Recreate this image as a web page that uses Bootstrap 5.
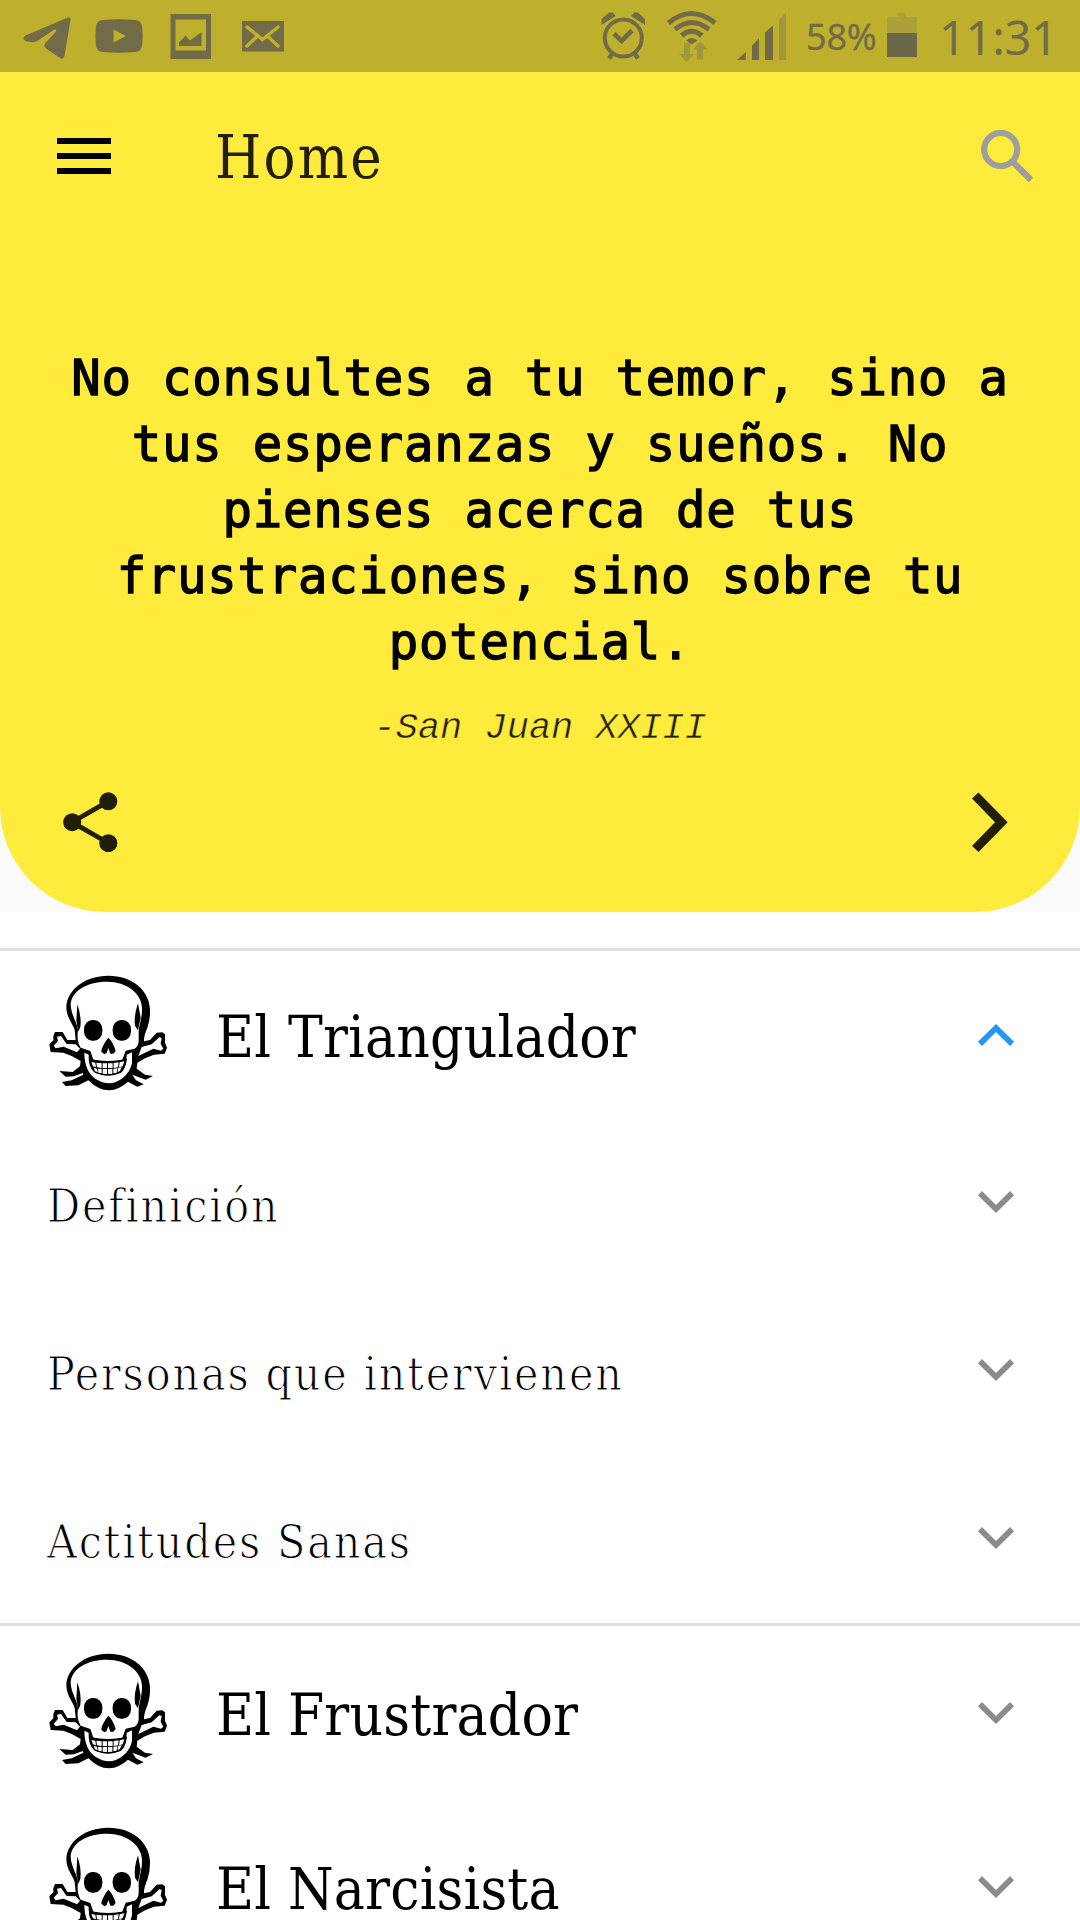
<!DOCTYPE html>
<html lang="es">
<head>
<meta charset="utf-8">
<meta name="viewport" content="width=device-width, initial-scale=1">
<title>Home</title>
<link href="https://cdn.jsdelivr.net/npm/bootstrap@5.3.0/dist/css/bootstrap.min.css" rel="stylesheet">
<style>
  body { width: 1080px; height: 1920px; overflow: hidden; background: #fff; }
  svg { display: block; flex: none; }
  .status-bar { height: 72px; background: #beb02c; color: #716c47; font-family: "Noto Sans", sans-serif; padding-left: 23px; white-space: nowrap; }
  .status-bar svg { fill: currentColor; }
  .pct { font-size: 36px; letter-spacing: -.2px; width: 80px; line-height: 72px; padding-top: 1px; -webkit-text-stroke: .3px currentColor; }
  .clock { font-size: 47px; letter-spacing: -.3px; width: 141px; line-height: 72px; padding-top: 1px; }
  .backdrop { background: #fafafa; }
  .hero { height: 912px; background: #ffeb3b; border-radius: 0 0 105px 105px; overflow: hidden; }
  .app-bar { height: 168px; padding: 0 47px 0 57px; }
  .slab { font-family: "DejaVu Serif Condensed", "DejaVu Serif", serif; font-stretch: condensed; font-size: 58px; line-height: 80px; color: #000; white-space: nowrap; padding-top: 4px; }
  .app-title { margin-left: 104px; color: #211f09; font-size: 59px; letter-spacing: 2.2px; }
  .quote { margin: 106px 0 0; height: 330px; font-family: "DejaVu Sans Mono", monospace; font-size: 49px; line-height: 66px; letter-spacing: .74px; color: #000; -webkit-text-stroke: 1.3px #000; }
  .author { font-family: "Liberation Mono", monospace; font-size: 37px; line-height: 50px; height: 50px; margin-top: 27px; color: #211f09; -webkit-text-stroke: .5px #ffeb3b; }
  .actions { padding: 0 72px 0 63px; margin-top: 39px; }
  .skulls { margin-top: 36px; }
  .group-head { height: 174px; padding: 0 66px 0 49px; }
  .group-head.open { height: 168px; }
  .group-head .slab { margin-left: 49px; letter-spacing: .2px; }
  .skull { margin-bottom: 5px; }
  .rule { height: 3px; background: #dfdfdf; }
  .sub { height: 168px; padding: 0 66px 0 47px; }
  .sub .slab { font-size: 46px; color: #000; letter-spacing: 1.85px; padding-top: 6px; -webkit-text-stroke: 1px #fff; }
  .sub svg { margin-bottom: 2px; }
</style>
</head>
<body>
<svg width="0" height="0" class="position-absolute">
  <defs>
    <symbol id="skull" viewBox="57 42 354 348">
      <path d="M137 237H112L98 213H75L70 225V238L58 250L62 273L100 275L125 285L152 300L150 316L128 333L88 330L107 347L132 346L158 336L160 341L125 358L96 363L107 375L145 373L175 358Q205 388 237 388Q268 386 294 362L322 377L341 370L318 358L307 341L347 356L369 345L345 341L320 323L322 305L345 292L372 281L404 278L411 260L405 245V220L397 214L380 215L360 237L342 241Q341 225 352 200Q361 175 360 145C358 88 307 44 235 44C165 44 111 86 109 138C109 170 130 190 134 207Z"/>
      <path fill="#fff" d="M144 208C144 190 122 160 122 130C124 93 166 62 232 62C290 62 335 98 336 140C337 170 328 188 326 210V238Q326 257 314 263L287 269L277 296Q234 305 190 296L181 270L152 260Q139 240 144 208Z"/>
      <path fill="#fff" d="M163 275L176 281Q174 316 192 333Q237 356 275 332Q290 316 290 281L306 274V306Q301 333 278 351Q240 381 197 354Q163 330 163 275ZM137 250L110 249L93 225L81 227L84 240L71 254L77 262L101 257L141 274L150 263ZM335 258L365 250L388 229L395 231L392 248L400 263L393 269L370 263L325 285Z"/>
      <path d="M142 130Q155 166 151 198L145 212L139 180ZM324 127Q311 164 315 194L324 208L332 170ZM235 230C224 243 214 262 214 272L223 280L230 276L235 261L241 278H250L257 270Q249 242 235 230Z"/>
      <rect x="162" y="177" width="55" height="62" rx="25" ry="28"/><rect x="248" y="177" width="55" height="62" rx="25" ry="28"/>
      <path d="M178 293Q235 307 291 293Q286 326 272 336Q236 348 195 335Q181 320 178 293Z"/>
      <path fill="#fff" d="M184 303l12 2 2 14-9-3zM199 305l16 2v14l-14-2zM218 307h13v14h-13zM234 307h14v14h-14zM251 306l15-2-2 15-13 2zM269 304l14-3-5 15-11 3zM191 320l10 3 2 11-8-3zM204 323l11 1v13l-10-2zM218 324h13v15l-13-1zM234 324h13v14l-13 1zM250 323l12-1-2 13-10 2zM264 321l11-3-5 12-7 3z"/>
    </symbol>
    <symbol id="down" viewBox="0 0 36 22"><path d="M4 0L18 14L32 0L36 4.3L18 22L0 4.3Z"/></symbol>
  </defs>
</svg>

<div class="backdrop">
<header class="hero">
  <div class="status-bar d-flex">
    <svg width="48" height="72" viewBox="23 0 48 72"><path d="M25 35.8L68 17.4Q71 17 70.5 20L64.5 56Q63 60 60 58L46 48.5Q43 46 45.500 43L56 31.500Q57 29 54.500 29.600L38 40.500Q34 43.500 25.500 41Q21.500 39 25 35.800Z"/></svg>
    <svg width="48" height="72" viewBox="95 0 48 72" style="margin-left:24px"><path fill-rule="evenodd" d="M103 20Q119 18.500 135 20Q141 20.500 142 26Q143.300 36 142 46Q141 51.500 135 52Q119 53.300 103 52Q97 51.500 96 46Q94.800 36 96 26Q97 20.500 103 20ZM113.500 29.500V42.500L126 36Z"/></svg>
    <svg width="41" height="72" viewBox="170 0 41 72" style="margin-left:27px"><path fill-rule="evenodd" d="M170.500 14H211V59H170.500ZM175.500 19.500V50.500H206V19.500ZM179 42.500L185.500 35.500L190 40.500L201.500 32V46H179Z"/></svg>
    <svg width="42" height="72" viewBox="242 0 42 72" style="margin-left:31px"><path d="M242 21H284V51.500H242Z"/><path d="M247 27L262.500 39.500L278 27M247 46L257 36.500M278 46L268 36.500" fill="none" stroke="#beb02c" stroke-width="3.400" stroke-linecap="round"/></svg>
    <svg width="44" height="72" viewBox="601 0 44 72" class="ms-auto"><g fill="none" stroke="currentColor"><circle cx="623.300" cy="38" r="18.500" stroke-width="4"/><path d="M614 33.500L621.500 41L632 30.500" stroke-width="4.600"/><path d="M612 54L609 58.500M635 54L638 58.500" stroke-width="4.500"/></g><path d="M601.500 25V19L609 12.500H613L615.500 16ZM645 25V19L638 12.500H634L631 16Z"/></svg>
    <svg width="50" height="72" viewBox="667 0 50 72" style="margin-left:22px"><g fill="none" stroke="currentColor" stroke-width="5"><path d="M668.500 23Q691.500 4 715 23"/><path d="M675 29.500Q691.500 15.500 709 29.500"/><path d="M681.500 35.500Q691.500 27 702 35.500"/></g><path d="M686 40.500Q691.500 35.500 697.500 40.500L691.700 44.500Z"/><path fill="#a0963a" d="M684 43h6v11h4l-7.500 8-7.500-8h5zM697 59.500h6V49.500h5L700 41.500 693 49.500h4z"/></svg>
    <svg width="50" height="72" viewBox="737 0 50 72" style="margin-left:20px"><path d="M737 60L745.800 52V60ZM752 60V45.500L759 38.500V60ZM765 60V32.500L773 25.500V60Z"/><path fill="#a0963a" d="M779 60V19.500L786 12.500V60Z"/></svg>
    <div class="pct" style="margin-left:19px">58%</div>
    <svg width="30" height="72" viewBox="887 0 30 72" style="margin-left:1px"><path fill="#ada03b" d="M887 33V17H898V12.500H906V17H917V33Z"/><path fill="#6b674b" d="M887 33H917V57H887Z"/></svg>
    <div class="clock" style="margin-left:22px">11:31</div>
  </div>

  <nav class="app-bar d-flex align-items-center">
    <svg width="54" height="36" viewBox="0 0 54 36"><path d="M0 0H54V6H0ZM0 15H54V21H0ZM0 30H54V36H0Z"/></svg>
    <div class="slab app-title">Home</div>
    <svg class="ms-auto" width="52" height="52" viewBox="981 129 52 52" fill="none" stroke="#9e9e9e"><circle cx="1000.700" cy="148.500" r="16.500" stroke-width="6.200"/><path d="M1012 160L1031 179" stroke-width="6.500"/></svg>
  </nav>

  <blockquote class="quote text-center">No consultes a tu temor, sino a<br>tus esperanzas y sueños. No<br>pienses acerca de tus<br>frustraciones, sino sobre tu<br>potencial.</blockquote>
  <div class="author text-center fst-italic">-San Juan XXIII</div>

  <div class="actions d-flex justify-content-between align-items-center">
    <svg width="55" height="60" viewBox="63 792 55 60" fill="#211f09"><path d="M108.300 801.300L72 822.200L108.300 843" fill="none" stroke="#211f09" stroke-width="4.800"/><circle cx="108.300" cy="801.300" r="9"/><circle cx="72.200" cy="822.200" r="9"/><circle cx="108.300" cy="843.200" r="9"/></svg>
    <svg width="36" height="60" viewBox="972 792 36 60" fill="#211f09"><path d="M978.500 792.500L1007.700 822.200L978.500 852L972 846L995 822.200L972 798.500Z"/></svg>
  </div>
</header>
</div>

<main class="skulls">
  <div class="rule"></div>
  <div class="group-head open d-flex align-items-center">
    <svg class="skull" width="118" height="116"><use href="#skull"/></svg>
    <div class="slab">El Triangulador</div>
    <svg class="ms-auto" width="36" height="22" viewBox="0 0 36 22" fill="#2196f3"><path d="M18 0L36 17.700L32 22L18 8L4 22L0 17.700Z"/></svg>
  </div>
  <div class="sub d-flex align-items-center justify-content-between"><div class="slab">Definición</div><svg width="36" height="22" fill="#8b8b8b"><use href="#down"/></svg></div>
  <div class="sub d-flex align-items-center justify-content-between"><div class="slab">Personas que intervienen</div><svg width="36" height="22" fill="#8b8b8b"><use href="#down"/></svg></div>
  <div class="sub d-flex align-items-center justify-content-between"><div class="slab">Actitudes Sanas</div><svg width="36" height="22" fill="#8b8b8b"><use href="#down"/></svg></div>
  <div class="rule"></div>
  <div class="group-head d-flex align-items-center">
    <svg class="skull" width="118" height="116"><use href="#skull"/></svg>
    <div class="slab">El Frustrador</div>
    <svg class="ms-auto" width="36" height="22" fill="#8b8b8b"><use href="#down"/></svg>
  </div>
  <div class="group-head d-flex align-items-center">
    <svg class="skull" width="118" height="116"><use href="#skull"/></svg>
    <div class="slab">El Narcisista</div>
    <svg class="ms-auto" width="36" height="22" fill="#8b8b8b"><use href="#down"/></svg>
  </div>
</main>
<script src="https://cdn.jsdelivr.net/npm/bootstrap@5.3.0/dist/js/bootstrap.bundle.min.js"></script>
</body>
</html>
